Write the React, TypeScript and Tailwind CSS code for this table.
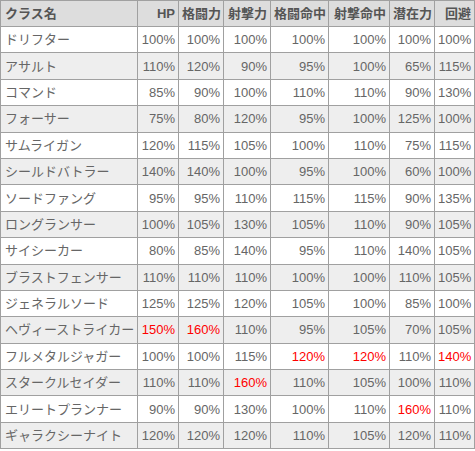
import React from 'react';

// Class stat table
type Row = { name: string; v: number[]; hi?: number[] };

const headers = ['HP', '格闘力', '射撃力', '格闘命中', '射撃命中', '潜在力', '回避'];
const widths = ['w-[41px]', 'w-[45px]', 'w-[47px]', 'w-[58px]', 'w-[61px]', 'w-[45px]', 'w-[40px]'];

const rows: Row[] = [
  { name: 'ドリフター', v: [100, 100, 100, 100, 100, 100, 100] },
  { name: 'アサルト', v: [110, 120, 90, 95, 100, 65, 115] },
  { name: 'コマンド', v: [85, 90, 100, 110, 110, 90, 130] },
  { name: 'フォーサー', v: [75, 80, 120, 95, 100, 125, 100] },
  { name: 'サムライガン', v: [120, 115, 105, 100, 110, 75, 115] },
  { name: 'シールドバトラー', v: [140, 140, 100, 95, 100, 60, 100] },
  { name: 'ソードファング', v: [95, 95, 110, 115, 115, 90, 135] },
  { name: 'ロングランサー', v: [100, 105, 130, 105, 110, 90, 105] },
  { name: 'サイシーカー', v: [80, 85, 140, 95, 110, 140, 105] },
  { name: 'ブラストフェンサー', v: [110, 110, 110, 100, 100, 110, 105] },
  { name: 'ジェネラルソード', v: [125, 125, 120, 105, 100, 85, 100] },
  { name: 'ヘヴィーストライカー', v: [150, 160, 110, 95, 105, 70, 105], hi: [0, 1] },
  { name: 'フルメタルジャガー', v: [100, 100, 115, 120, 120, 110, 140], hi: [3, 4, 6] },
  { name: 'スタークルセイダー', v: [110, 110, 160, 110, 105, 100, 110], hi: [2] },
  { name: 'エリートプランナー', v: [90, 90, 130, 100, 110, 160, 110], hi: [5] },
  { name: 'ギャラクシーナイト', v: [120, 120, 120, 110, 105, 120, 110] },
];

export default function App() {
  return (
    <div className="bg-white w-[475px] h-[451px]">
      <table
        className="border-collapse table-fixed w-[474px] text-[13px] leading-none"
        style={{ fontFamily: '"Liberation Sans", Arial, "Noto Sans CJK JP", sans-serif' }}
      >
        <thead>
          <tr className="h-[26px] bg-[#dddddd] text-[#555555]">
            <th className="w-[137px] border border-[#a0a0a0] px-[4px] text-left font-bold whitespace-nowrap">クラス名</th>
            {headers.map((h, i) => (
              <th key={h} className={`${widths[i]} border border-[#a0a0a0] px-[3px] text-right font-bold whitespace-nowrap`}>
                {h}
              </th>
            ))}
          </tr>
        </thead>
        <tbody>
          {rows.map((r, ri) => (
            <tr key={r.name} className={`h-[26.4px] text-[#666666] ${ri % 2 === 1 ? 'bg-[#eeeeee]' : 'bg-white'}`}>
              <td className="border border-[#a0a0a0] px-[4px] text-left whitespace-nowrap">{r.name}</td>
              {r.v.map((n, i) => (
                <td
                  key={i}
                  className={`border border-[#a0a0a0] px-[3px] text-right whitespace-nowrap ${r.hi?.includes(i) ? 'text-[#ff0000]' : ''}`}
                >
                  {n}%
                </td>
              ))}
            </tr>
          ))}
        </tbody>
      </table>
    </div>
  );
}
